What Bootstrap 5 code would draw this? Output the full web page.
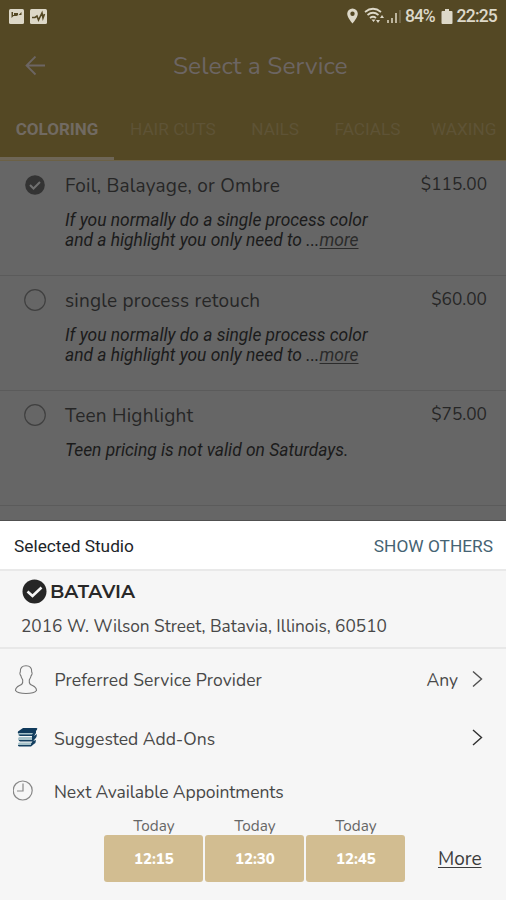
<!DOCTYPE html>
<html lang="en">
<head>
<meta charset="utf-8">
<meta name="viewport" content="width=device-width, initial-scale=1">
<title>Select a Service</title>
<link href="https://cdn.jsdelivr.net/npm/bootstrap@5.3.0/dist/css/bootstrap.min.css" rel="stylesheet">
<style>
body{font-family:Nunito,Lato,sans-serif;background:#f6f6f6;width:506px;height:900px;overflow:hidden;color:#484848}
svg{display:block;flex:none}
.robo{font-family:Roboto,sans-serif}
.app-head{height:160px;background:#544824;color:#6c6563}
.status{height:32px;padding:0 9px;color:#ddd8c8;font:500 17.5px/32px "Roboto",sans-serif;letter-spacing:-.8px}
.status-pct{margin-left:4px;letter-spacing:-1.1px}
.ico-gap{margin-left:6px}
.ico-wifi{margin-left:5px;margin-right:-1px}
.bar{height:68px;padding-left:25px}
.bar-title{font-size:24.5px;line-height:69px;margin-left:127px;letter-spacing:.05px}
.tabs{height:60px;font:400 17.2px/59px Roboto,sans-serif;color:#5e5336;white-space:nowrap}
.tab-on{color:#716a62;font-weight:700;font-size:17px;width:114px;border-bottom:3px solid #6e6657}
.tab-off{margin-left:35.5px}
.tab-last{margin-left:30.5px}
.svc-list{height:361px;background:#666;overflow:hidden;border-top:1px solid #6c6146;border-bottom:1px solid #505050;color:#262626}
.svc{height:115.2px;border-bottom:1px solid #5b5b5b;padding:11px 19px 0 24px}
.svc:first-child{height:114.5px}
.svc-body{margin-left:19px;padding-top:1px}
.svc-name{font-size:19px;line-height:26px;letter-spacing:.22px}
.svc-price{font-size:17.3px;line-height:25px}
.svc-desc{font:italic 400 17.4px/20.4px Roboto,sans-serif;color:#1b1b1b;margin-top:11px}
.desc-more{text-decoration:underline;color:#2b2b2b;text-underline-offset:2px}
.sheet-head{height:50px;background:#fff;border-bottom:2px solid #e9e9e9;padding:3px 13px 0 14px;font-size:17.3px}
.show-others{color:#456373}
.studio{height:78px;border-bottom:2px solid #e8e8e8;padding:8px 0 0 21px}
.studio-name{font:600 18.8px/26px Montserrat,Lato,sans-serif;color:#282828}
.addr{font-size:17.3px;line-height:24px;margin-top:10px}
.opt{font-size:17.5px;padding-right:23px}
.opt-a{height:61px}
.opt-b{height:56px}
.opt-c{height:50px}
.opt-icon{width:54px;padding-left:13px}
.opt-text{padding-top:2px}
.opt-wide{letter-spacing:.1px;margin-left:.5px}
.opt-tight{letter-spacing:-.08px}
.opt-value{margin-right:14px}
.slots{padding-left:104.4px}
.slot{width:99px;margin-right:2px}
.slot-day{font-size:15.3px;line-height:18px;color:#666;padding-top:1px}
.slot-btn{height:47px;background:#d2bd91;border-radius:3px;color:#fff;font-weight:800;font-size:15px;line-height:49px}
.more-link{font-size:19px;line-height:30px;color:#3c3c3c;margin-left:30.6px;text-decoration:underline;text-underline-offset:2px}
</style>
<script src="https://cdn.jsdelivr.net/npm/bootstrap@5.3.0/dist/js/bootstrap.bundle.min.js"></script>
</head>
<body>
<header class="app-head">
  <div class="status d-flex align-items-center">
    <svg width="15" height="15" viewBox="0 0 15 15"><rect width="15" height="15" rx="1.5" fill="#ddd8c8"/><path d="M2.500 3v6l2-2h3l2-1 3-3v3H9V4H5v2H4V3z" fill="#544824"/></svg>
    <svg class="ico-gap" width="17" height="15" viewBox="0 0 17 15"><rect width="17" height="15" rx="1.5" fill="#ddd8c8"/><path d="M2 8.500h3L7 7l1.500 4L12 4l1 5 1.500-4" fill="none" stroke="#544824" stroke-width="1.600"/></svg>
    <svg class="ms-auto" width="13" height="16" viewBox="0 0 13 16"><path fill="#ddd8c8" fill-rule="evenodd" d="M6.500.5a5.300 5.300 0 0 1 5.300 5.300c0 4-5.300 9.700-5.300 9.700S1.200 9.800 1.200 5.800A5.300 5.300 0 0 1 6.500.5zm0 3a2.200 2.200 0 1 0 0 4.400 2.200 2.200 0 0 0 0-4.400z"/></svg>
    <svg class="ico-wifi" width="38" height="18" viewBox="0 0 38 18"><g fill="none" stroke="#ddd8c8" stroke-width="1.700"><path d="M1 5q8-6.500 16 0M3.500 8q5.500-4.500 11 0M6 11q3-2.500 6 0"/></g><path d="M9.500 15l-2-2.500h4zM12 13l2 3 2-3zM16 11l2-3 2 3z" fill="#ddd8c8"/><path d="M24 16v-3M28 16v-5M32 16V6" stroke="#cfc8b3" stroke-width="1.700"/><path d="M36 16V3" stroke="#7c7254" stroke-width="1.500"/></svg>
    <span class="status-pct">84%</span>
    <svg class="ico-gap" width="12" height="15" viewBox="0 0 12 15"><path fill="#ddd8c8" d="M4 0h4v2h2.500q1 0 1 1v11q0 1-1 1h-9q-1 0-1-1V3q0-1 1-1H4z"/></svg>
    <span class="ms-1">22:25</span>
  </div>
  <div class="bar d-flex align-items-center">
    <svg width="21" height="21" viewBox="0 0 21 21" fill="none" stroke="#6c6563" stroke-width="1.800"><path d="M20 9.500H2M10.500.5l-9 9 9 9"/></svg>
    <div class="bar-title">Select a Service</div>
  </div>
  <nav class="tabs d-flex">
    <div class="tab-on text-center">COLORING</div><div class="ms-3">HAIR CUTS</div><div class="tab-off">NAILS</div><div class="tab-off">FACIALS</div><div class="tab-last">WAXING</div>
  </nav>
</header>
<main class="svc-list">
  <div class="svc d-flex">
    <svg width="22" height="26" viewBox="0 0 22 26"><circle cx="11" cy="13" r="9.800" fill="#333"/><path d="M6 13l3.500 3.500L16 10" fill="none" stroke="#707070" stroke-width="2"/></svg>
    <div class="svc-body flex-grow-1"><div class="svc-name">Foil, Balayage, or Ombre</div><div class="svc-desc">If you normally do a single process color<br>and a highlight you only need to ...<span class="desc-more">more</span></div></div>
    <div class="svc-price">$115.00</div>
  </div>
  <div class="svc d-flex">
    <svg width="22" height="26" viewBox="0 0 22 26"><circle cx="11" cy="13" r="10.300" fill="none" stroke="#404040" stroke-width="1.200"/></svg>
    <div class="svc-body flex-grow-1"><div class="svc-name">single process retouch</div><div class="svc-desc">If you normally do a single process color<br>and a highlight you only need to ...<span class="desc-more">more</span></div></div>
    <div class="svc-price">$60.00</div>
  </div>
  <div class="svc d-flex">
    <svg width="22" height="26" viewBox="0 0 22 26"><circle cx="11" cy="13" r="10.300" fill="none" stroke="#404040" stroke-width="1.200"/></svg>
    <div class="svc-body flex-grow-1"><div class="svc-name">Teen Highlight</div><div class="svc-desc">Teen pricing is not valid on Saturdays.</div></div>
    <div class="svc-price">$75.00</div>
  </div>
</main>
<section>
  <div class="sheet-head robo d-flex align-items-center justify-content-between"><span class="text-dark">Selected Studio</span><span class="show-others">SHOW OTHERS</span></div>
  <div class="studio">
    <div class="d-flex align-items-center studio-name"><svg width="29" height="26" viewBox="0 0 29 26"><circle cx="13.500" cy="12.500" r="12" fill="#262626"/><path d="M6.500 12.500l5 4.500 9-8.500" fill="none" stroke="#f6f6f6" stroke-width="2.600"/></svg>BATAVIA</div>
    <div class="addr">2016 W. Wilson Street, Batavia, Illinois, 60510</div>
  </div>
  <div class="opt opt-a d-flex align-items-center">
    <div class="opt-icon"><svg width="26" height="30" viewBox="0 0 26 30" fill="none" stroke="#777" stroke-width="1.100"><path d="M13 .8C9 .8 7 3 7.300 7c-.8 1-.3 3 .7 4 .3 2 1.500 3 1.700 4 .2 2 0 3-.7 4-2 2-6.500 2-6.500 6.500C4 27.500 8 28.500 13 28.500s9-1 10.500-3c0-4.500-4.500-4.500-6.500-6.500-.7-1-.9-2-.7-4 .2-1 1.400-2 1.700-4 1-1 1.500-3 .7-4C19 3 17 .8 13 .8z"/></svg></div>
    <span class="opt-text opt-wide">Preferred Service Provider</span><span class="opt-text opt-value ms-auto">Any</span>
    <svg width="11" height="18" viewBox="0 0 11 18" fill="none" stroke="#505050" stroke-width="1.400"><path d="M1 .5L9.500 8 1 15.500"/></svg>
  </div>
  <div class="opt opt-b d-flex align-items-center">
    <div class="opt-icon"><svg width="26" height="22" viewBox="0 0 26 22"><path d="M10 1h13.500q1.500 0 .5 1.500L21 7H6Q4 6 5 4.500z" fill="#103a5c"/><path d="M6 6h14v3H6Q4 7.500 6 6zM6 10h15v4H6q-2-2 0-4zM6 15.500h13v3H6q-2-1.500 0-3z" fill="#a5c1c9"/><path d="M20 6l3-3v3l-2 3 3-2q0 3-2 5l-2 2 3-1q0 3-2 4l-3 2.500H6q-1.500-1-1-1.500h13v-1.200l1.500-2.300H7q-1.500-1-1-1.500h13v-4H7q-1.500-1-1-1.500h13z" fill="#143f60"/></svg></div>
    <span class="opt-text">Suggested Add-Ons</span>
    <svg class="ms-auto" width="11" height="18" viewBox="0 0 11 18" fill="none" stroke="#303030" stroke-width="1.400"><path d="M1 1L9.500 8.500 1 16"/></svg>
  </div>
  <div class="opt opt-c d-flex align-items-center">
    <div class="opt-icon"><svg width="21" height="22" viewBox="0 0 21 22" fill="none" stroke="#888" stroke-width="1.200"><circle cx="9.700" cy="10.500" r="9.500"/><path d="M10 3.500V11H4"/></svg></div>
    <span class="opt-text opt-tight">Next Available Appointments</span>
  </div>
  <div class="slots d-flex align-items-end">
    <div class="slot text-center"><div class="slot-day">Today</div><div class="slot-btn">12:15</div></div>
    <div class="slot text-center"><div class="slot-day">Today</div><div class="slot-btn">12:30</div></div>
    <div class="slot text-center"><div class="slot-day">Today</div><div class="slot-btn">12:45</div></div>
    <a class="more-link pb-2" href="#">More</a>
  </div>
</section>
</body>
</html>
